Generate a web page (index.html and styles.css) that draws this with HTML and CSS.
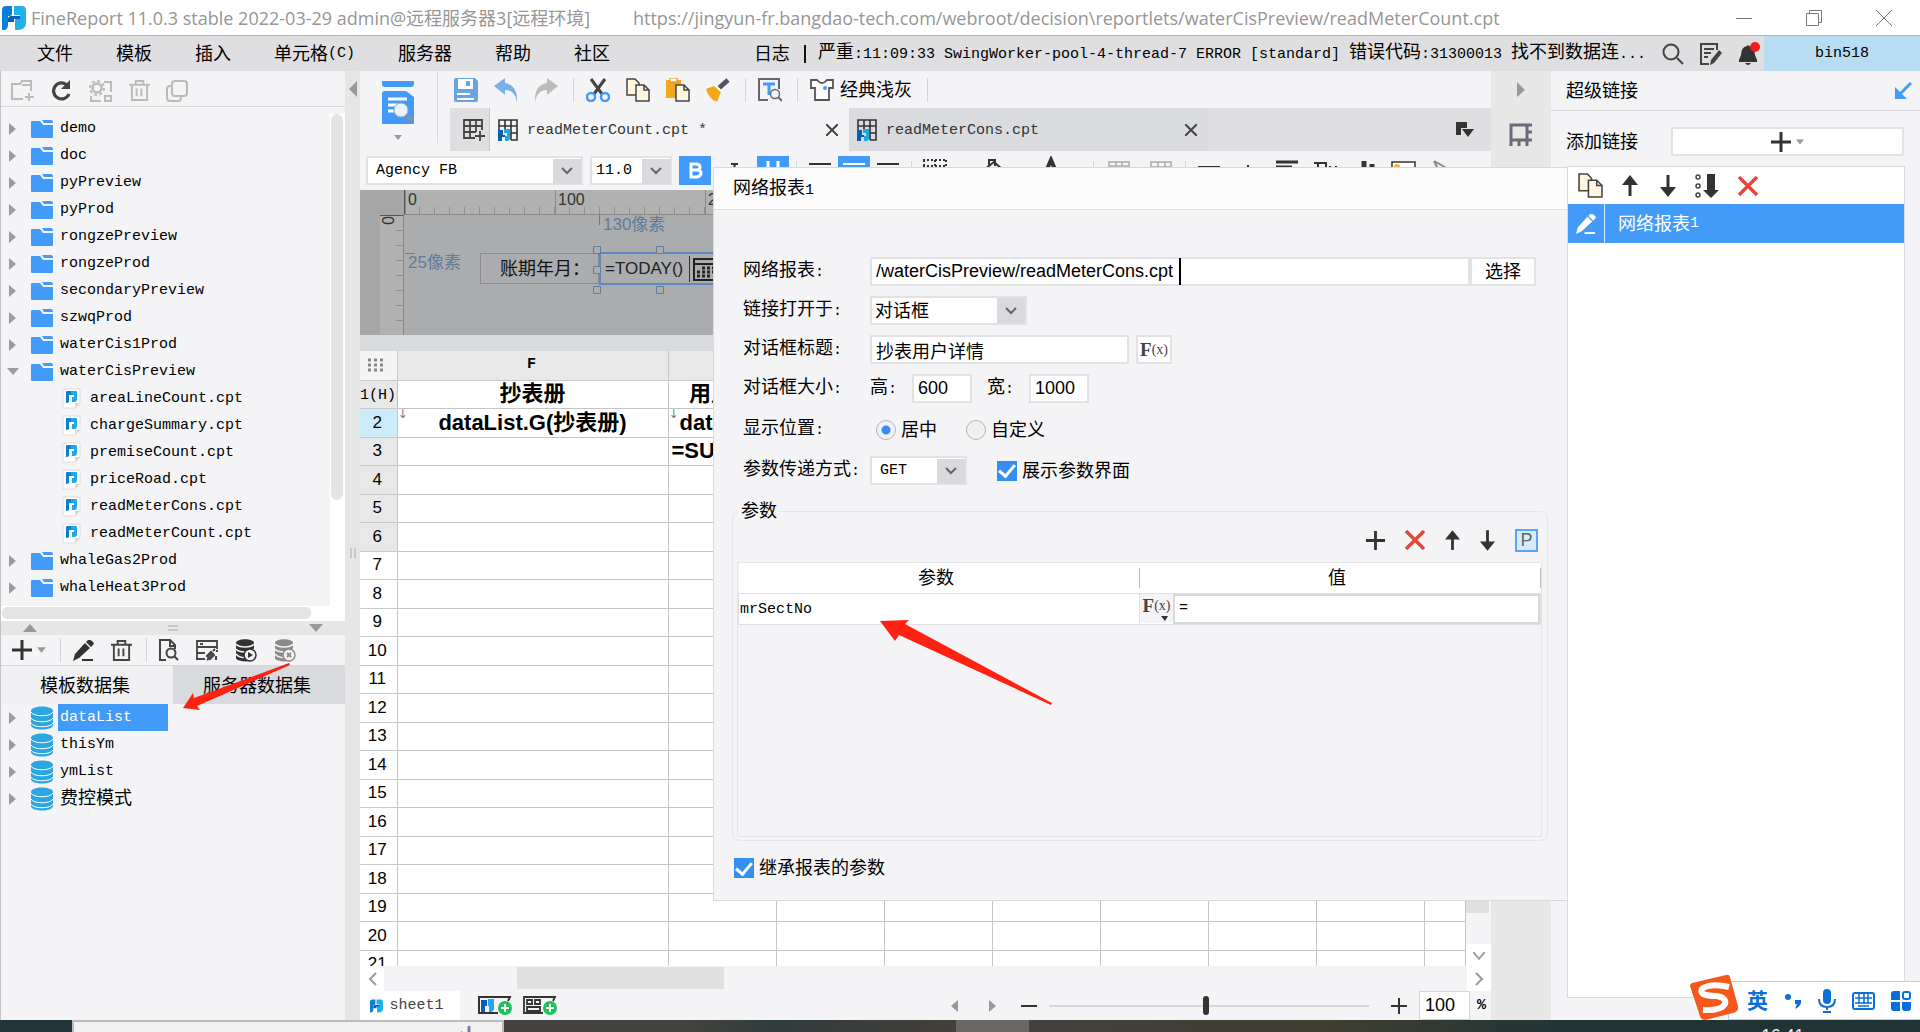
FILE: index.html
```html
<!DOCTYPE html>
<html lang="zh-CN">
<head>
<meta charset="utf-8">
<title>FineReport 11.0.3</title>
<link rel="stylesheet" href="styles.css">
</head>
<body>
<svg class="defs" aria-hidden="true">
  <symbol id="logo" viewBox="0 0 24 24"><path fill="#0a7fd8" d="M4 0h6v8q0 2-2 2H6v9q0 5-5 5H0V4q0-4 4-4z"/><path fill="#22b0e8" d="M12 0h8q4 0 4 4v12q0 8-8 8h-3V12h5V9h-6z"/><path fill="#0a5fb4" d="M8 10h10v3h-6v3H6v-4z"/></symbol>
  <symbol id="chev" viewBox="0 0 12 8"><path d="M1 1l5 5 5-5" fill="none" stroke="#666" stroke-width="2"/></symbol>
  <symbol id="folder" viewBox="0 0 22 18"><path fill="#429bf9" d="M0 2q0-1 1-1h8l3 4h10v12q0 1-1 1H1q-1 0-1-1z"/><path fill="#429bf9" d="M11 0h9q2 0 2 3h-9z"/></symbol>
  <symbol id="cpt" viewBox="0 0 19 21"><path fill="#fff" stroke="#dcdcdf" d="M1 1h17v14l-5 5H1z"/><path fill="#dcdcdf" d="M18 15l-5 5v-5z"/><path fill="#0a7fd8" d="M4 4q0-1 1-1h4v4H7v7q-1 1-3 1z"/><path fill="#20a8e6" d="M9 3h5q1 0 1 1v7q0 3-3 3h-2V9h2V7H9z"/></symbol>
  <symbol id="db" viewBox="0 0 22 24"><path fill="#2ca6e0" d="M0 5c0-6 22-6 22 0v14c0 6-22 6-22 0z"/><path d="M0 6c2 5 20 5 22 0M0 12c2 5 20 5 22 0M0 17c2 5 20 5 22 0" fill="none" stroke="#fff" stroke-width="1"/></symbol>
  <symbol id="plus" viewBox="0 0 20 20"><path d="M10 0v20M0 10h20" stroke="#333" stroke-width="3"/></symbol>
  <symbol id="cross" viewBox="0 0 20 20"><path d="M1 1l18 18M19 1L1 19" stroke="#e8443a" stroke-width="3.4"/></symbol>
  <symbol id="up" viewBox="0 0 16 22"><path d="M8 6v15" stroke="#333" stroke-width="3"/><path fill="#333" d="M8 0l8 10H0z"/></symbol>
  <symbol id="down" viewBox="0 0 16 22"><path d="M8 0v15" stroke="#333" stroke-width="3"/><path fill="#333" d="M8 22l8-10H0z"/></symbol>
  <symbol id="copy" viewBox="0 0 24 24"><g fill="#fff6e0" stroke="#444" stroke-width="1.5"><path d="M1 1h8l4 4v12H1z"/><path d="M10 7h8l5 5v11H10z"/><path d="M18 7v5h5" fill="none"/></g></symbol>
  <symbol id="tri" viewBox="0 0 10 6"><path fill="#999" d="M0 0h10L5 6z"/></symbol>
  <symbol id="trash" viewBox="0 0 22 22"><path d="M0 5h22M7 5V1h8v4M3 5v16h16V5M8 9v8M13 9v8" fill="none" stroke="currentColor" stroke-width="2"/></symbol>
  <symbol id="sheet" viewBox="0 0 20 22"><path d="M1 11V1h18v20h-6M1 7h18M13 14h6M7 1v9M13 1v20" fill="none" stroke="#333" stroke-width="1.6"/><path fill="#0a5fb4" d="M0 11h5v5h2v2H4v4H0z"/><path fill="#22a8e8" d="M6 10h6v9q0 3-3 3H7v-5h2v-3H6z"/></symbol>
  <symbol id="pencil" viewBox="0 0 21 21"><path fill="currentColor" d="M15 0q1-1 4 1t1 4l-2 2-5-5zM12 3l5 5L6 18l-6 3 2-7z"/><path stroke="currentColor" stroke-width="2" d="M9 20h11"/></symbol>
</svg>

<header class="titlebar">
  <svg class="applogo"><use href="#logo"/></svg>
  <span class="t1">FineReport 11.0.3 stable 2022-03-29 admin@远程服务器3[远程环境]</span>
  <span class="t2">https://jingyun-fr.bangdao-tech.com/webroot/decision\reportlets/waterCisPreview/readMeterCount.cpt</span>
  <div class="winbtns">
    <button aria-label="最小化"><svg width="16" height="16"><path d="M0 8.500h16" stroke="#777"/></svg></button>
    <button aria-label="还原"><svg width="16" height="16"><path d="M.5 3.500h12v12h-12zM3.500 3V.5h12v12H13" fill="none" stroke="#777"/></svg></button>
    <button aria-label="关闭"><svg width="16" height="16"><path d="M0 0l16 16M16 0L0 16" stroke="#777"/></svg></button>
  </div>
</header>

<nav class="menubar">
  <button>文件</button><button>模板</button><button>插入</button><button>单元格<i>(C)</i></button><button>服务器</button><button>帮助</button><button>社区</button>
  <p class="log"><span>日志</span><b></b><span>严重<i>:11:09:33 SwingWorker-pool-4-thread-7 ERROR [standard] </i>错误代码<i>:31300013 </i>找不到数据连<i>...</i></span></p>
  <div class="tools">
    <svg width="22" height="22" viewBox="0 0 22 22"><circle cx="9" cy="9" r="7.500" fill="none" stroke="#444" stroke-width="2"/><path d="M15 15l6 6" stroke="#444" stroke-width="2"/></svg>
    <svg width="22" height="22" viewBox="0 0 22 22"><path d="M17 7V1H1v20h8M4 6h10M4 10h7M4 14h4" fill="none" stroke="#444" stroke-width="2"/><path fill="#444" d="M19 7l3 3-8 10-4 2 1-5z"/></svg>
    <svg width="22" height="24" viewBox="0 0 22 24"><path fill="#333" d="M9 4q1-2 2 0q6 1 6 9l2 5v2H1v-2l2-5q0-8 6-9zM7 21h6q-3 4-6 0z"/><circle cx="17" cy="5" r="5" fill="#f21d1d"/></svg>
  </div>
  <button class="user"><i>bin518</i></button>
</nav>

<main class="app">
  <aside class="left">
    <div class="lefttools">
      <svg width="24" height="22" viewBox="0 0 24 22"><path d="M12 19H1V4h8l2-3h9v10M11 5h9M18 13v8M14 17h9" fill="none" stroke="#bbb" stroke-width="2"/></svg>
      <svg width="22" height="22" viewBox="0 0 22 22"><path d="M16 5a8 8 0 1 0 2 9" fill="none" stroke="#444" stroke-width="3.200"/><path fill="#444" d="M19 0v9h-9z"/></svg>
      <svg width="24" height="22" viewBox="0 0 24 22"><circle cx="8" cy="8" r="4.500" fill="none" stroke="#bbb" stroke-width="2.500"/><circle cx="8" cy="8" r="7" fill="none" stroke="#bbb" stroke-width="2" stroke-dasharray="3 2.500"/><path d="M15 2h7v10M2 16v5h10M16 20v-4h6v5h-6z" fill="none" stroke="#bbb" stroke-width="2"/></svg>
      <svg width="21" height="21" color="#bbb"><use href="#trash"/></svg>
      <svg width="22" height="22" viewBox="0 0 22 22"><rect x="6" y="1" width="15" height="15" rx="3" fill="none" stroke="#bbb" stroke-width="2"/><path d="M6 6H4q-3 0-3 3v9q0 3 3 3h8q3 0 3-3v-2" fill="none" stroke="#bbb" stroke-width="2"/></svg>
    </div>
    <div class="treebox">
      <ul class="tree">
        <li class="node"><svg><use href="#folder"/></svg><i>demo</i></li>
        <li class="node"><svg><use href="#folder"/></svg><i>doc</i></li>
        <li class="node"><svg><use href="#folder"/></svg><i>pyPreview</i></li>
        <li class="node"><svg><use href="#folder"/></svg><i>pyProd</i></li>
        <li class="node"><svg><use href="#folder"/></svg><i>rongzePreview</i></li>
        <li class="node"><svg><use href="#folder"/></svg><i>rongzeProd</i></li>
        <li class="node"><svg><use href="#folder"/></svg><i>secondaryPreview</i></li>
        <li class="node"><svg><use href="#folder"/></svg><i>szwqProd</i></li>
        <li class="node"><svg><use href="#folder"/></svg><i>waterCis1Prod</i></li>
        <li class="node open"><svg><use href="#folder"/></svg><i>waterCisPreview</i></li>
        <li class="leaf"><svg><use href="#cpt"/></svg><i>areaLineCount.cpt</i></li>
        <li class="leaf"><svg><use href="#cpt"/></svg><i>chargeSummary.cpt</i></li>
        <li class="leaf"><svg><use href="#cpt"/></svg><i>premiseCount.cpt</i></li>
        <li class="leaf"><svg><use href="#cpt"/></svg><i>priceRoad.cpt</i></li>
        <li class="leaf"><svg><use href="#cpt"/></svg><i>readMeterCons.cpt</i></li>
        <li class="leaf"><svg><use href="#cpt"/></svg><i>readMeterCount.cpt</i></li>
        <li class="node"><svg><use href="#folder"/></svg><i>whaleGas2Prod</i></li>
        <li class="node"><svg><use href="#folder"/></svg><i>whaleHeat3Prod</i></li>
      </ul>
      <div class="vbar"><div></div></div>
    </div>
    <div class="hbar"><div></div></div>
    <div class="hsplit">
      <svg width="14" height="8" viewBox="0 0 14 8"><path fill="#999" d="M0 8h14L7 0z"/></svg>
      <svg width="10" height="6"><path d="M0 1h10M0 5h10" stroke="#aaa" stroke-width="1"/></svg>
      <svg width="14" height="8" viewBox="0 0 14 8"><path fill="#999" d="M0 0h14L7 8z"/></svg>
    </div>
    <div class="dstools">
      <svg width="20" height="20"><use href="#plus"/></svg><svg class="dd" width="9" height="6"><use href="#tri"/></svg><b></b>
      <svg width="21" height="21" color="#333"><use href="#pencil"/></svg>
      <svg width="21" height="21" color="#444"><use href="#trash"/></svg><b></b>
      <svg width="20" height="22" viewBox="0 0 20 22"><path d="M7 21H1V1h10l5 5v4M11 1v6h5" fill="none" stroke="#444" stroke-width="2"/><circle cx="12" cy="14" r="4.500" fill="none" stroke="#444" stroke-width="2"/><path d="M15 17l4 4" stroke="#444" stroke-width="2"/></svg>
      <svg width="22" height="22" viewBox="0 0 22 22"><path d="M9 20H1V2h20v8M1 8h20M4 5h3M1 14h8" fill="none" stroke="#444" stroke-width="1.800"/><path d="M11 17l4-4 3 3-4 4zM17 12l2-2M11 21l2-2M21 13v-2M20 17v4" stroke="#444" stroke-width="2" fill="#555"/></svg>
      <svg width="22" height="23" viewBox="0 0 22 23"><path fill="#333" d="M1 4c0-5 18-5 18 0v15c0 5-18 4-18 0z"/><path d="M1 5c3 4 15 4 18 0M1 10c3 4 15 4 18 0M1 15c3 4 9 4 10 3" fill="none" stroke="#f4f4f6" stroke-width="1.500"/><circle cx="15" cy="16" r="6" fill="#f4f4f6" stroke="#333" stroke-width="1.500"/><path fill="#333" d="M13 13l5 3-5 3z"/></svg>
      <svg width="22" height="23" viewBox="0 0 22 23"><path fill="#8a8a8a" d="M1 4c0-5 18-5 18 0v15c0 5-18 4-18 0z"/><path d="M1 5c3 4 15 4 18 0M1 10c3 4 15 4 18 0M1 15c3 4 9 4 10 3" fill="none" stroke="#f4f4f6" stroke-width="1.500"/><circle cx="15" cy="16" r="6" fill="#f4f4f6" stroke="#8a8a8a" stroke-width="1.500"/><path stroke="#8a8a8a" stroke-width="2" d="M13 14l4 4M17 14l-4 4"/></svg>
    </div>
    <div class="dstabs"><button>模板数据集</button><button>服务器数据集</button></div>
    <ul class="tree sets">
      <li class="node sel"><svg><use href="#db"/></svg><i>dataList</i></li>
      <li class="node"><svg><use href="#db"/></svg><i>thisYm</i></li>
      <li class="node"><svg><use href="#db"/></svg><i>ymList</i></li>
      <li class="node"><svg><use href="#db"/></svg><span>费控模式</span></li>
    </ul>
  </aside>
  <div class="vsplit"><svg width="8" height="16"><path fill="#999" d="M8 0v16L0 8z"/></svg><svg class="grip" width="6" height="10"><path d="M1 0v10M5 0v10" stroke="#aaa"/></svg></div>

  <section class="center">
    <div class="tophead">
      <button class="preview" aria-label="预览"><svg width="32" height="43" viewBox="0 0 32 43"><path fill="#429bf9" d="M0 0h32v3q0 3-3 3H3Q0 6 0 3zM3 10h21l8 6v26q0 1-1 1H1q-1 0-1-1V13q0-3 3-3z"/><path stroke="#fff" stroke-width="3" d="M6 18h19M6 24h10M6 30h8"/><circle cx="19" cy="29" r="7" fill="#e9f1fa" stroke="#9ab" stroke-width="1"/><path stroke="#8a8f96" stroke-width="4" d="M25 35l5 5"/></svg><svg width="8" height="5"><use href="#tri"/></svg></button>
      <div class="headmain">
        <div class="icons">
          <svg viewBox="0 0 24 24"><path fill="#6ba3e0" d="M2 0h19l3 3v19q0 2-2 2H2q-2 0-2-2V2q0-2 2-2z"/><path fill="#fff" d="M4 1h15v10H4zM3 15h13v2H3zM3 20h17v2H3z"/><path fill="#6ba3e0" d="M12 3h4v5h-4z"/></svg>
          <svg viewBox="0 0 24 24"><path fill="#7ab0ea" d="M0 8L11 0v5q13 2 12 19Q21 12 11 12v5z"/></svg>
          <svg viewBox="0 0 24 24"><path fill="#bbb" d="M24 8L13 0v5Q0 7 1 24 3 12 13 12v5z"/></svg>
          <b></b>
          <svg viewBox="0 0 24 24"><path d="M5 1l11 15M19 1L8 16" stroke="#444" stroke-width="3"/><circle cx="5" cy="19" r="4" fill="none" stroke="#429bf9" stroke-width="2.500"/><circle cx="19" cy="19" r="4" fill="none" stroke="#429bf9" stroke-width="2.500"/></svg>
          <svg><use href="#copy"/></svg>
          <svg viewBox="0 0 24 24"><path fill="#f2a81d" d="M0 2h15v18H0z"/><path fill="#fff" stroke="#d98d10" d="M4 0h7v4H4z"/><path fill="#fff6e0" stroke="#444" stroke-width="1.500" d="M10 7h8l5 5v11H10zM18 7v5h5"/></svg>
          <svg viewBox="0 0 24 24"><path fill="#f2a81d" d="M0 11l8-3 7 6-4 10Q3 21 0 11z"/><path stroke="#556" stroke-width="5" d="M13 10l9-8"/><path stroke="#fff" stroke-width="2" d="M9 7l7 7"/></svg>
          <b></b>
          <svg viewBox="0 0 24 24"><path d="M10 22H1V1h20v10" fill="none" stroke="#667" stroke-width="2"/><path d="M5 6h12M11 6v11" stroke="#429bf9" stroke-width="3"/><circle cx="17" cy="16" r="4.500" fill="#f4f4f6" stroke="#667" stroke-width="1.500"/><path d="M20 19l4 4" stroke="#667" stroke-width="2"/></svg>
          <b></b>
          <svg viewBox="0 0 24 24"><path d="M7 2H1v8h4v12h14V10h4V2h-6q-5 6-10 0z" fill="#fff" stroke="#555" stroke-width="1.800"/><circle cx="15" cy="10" r="2" fill="#429bf9"/></svg>
          <span>经典浅灰</span><b></b>
        </div>
        <div class="doctabs">
          <button class="add" aria-label="新建"><svg width="22" height="22" viewBox="0 0 22 22"><path d="M12 19H1V1h18v10M1 7h18M1 13h12M7 1v18M13 1v12M17 12v10M12 17h10" fill="none" stroke="#444" stroke-width="1.800"/></svg></button>
          <div class="dtab on"><svg width="20" height="22"><use href="#sheet"/></svg><i>readMeterCount.cpt *</i><button aria-label="关闭"><svg width="12" height="12"><path d="M0 0l12 12M12 0L0 12" stroke="#444" stroke-width="2"/></svg></button></div>
          <div class="dtab"><svg width="20" height="22"><use href="#sheet"/></svg><i>readMeterCons.cpt</i><button aria-label="关闭"><svg width="12" height="12"><path d="M0 0l12 12M12 0L0 12" stroke="#444" stroke-width="2"/></svg></button></div>
          <svg class="more" width="18" height="15"><path fill="#333" d="M0 0h11v6H5v7H0zM6 7h12l-6 8z"/></svg>
        </div>
      </div>
    </div>
    <div class="format">
      <div class="combo fontname"><select aria-label="字体"><option>Agency FB</option></select><svg><use href="#chev"/></svg></div>
      <div class="combo fontsize"><select aria-label="字号"><option>11.0</option></select><svg><use href="#chev"/></svg></div>
      <button class="on" aria-label="加粗"><svg viewBox="0 0 32 29"><path d="M12 8h5q4 0 4 3t-4 3h-5zM12 14h6q4 0 4 3t-4 4h-6z" fill="none" stroke="#fff" stroke-width="3"/></svg></button>
      <button aria-label="斜体"><svg viewBox="0 0 32 29"><path d="M13 8h7M17 8l-3 14" stroke="#333" stroke-width="2"/></svg></button>
      <button class="on" aria-label="下划线"><svg viewBox="0 0 32 29"><path d="M11 5v8q0 5 5 5t5-5V5" fill="none" stroke="#fff" stroke-width="3"/></svg></button>
      <b></b>
      <button aria-label="左对齐"><svg viewBox="0 0 32 29"><path d="M5 8h22M5 12h14" stroke="#333" stroke-width="2"/></svg></button>
      <button class="on near" aria-label="居中"><svg viewBox="0 0 32 29"><path d="M5 8h22M9 12h14" stroke="#fff" stroke-width="2"/></svg></button>
      <button class="near" aria-label="右对齐"><svg viewBox="0 0 32 29"><path d="M5 8h22M13 12h14" stroke="#333" stroke-width="2"/></svg></button>
      <b></b>
      <button aria-label="边框"><svg viewBox="0 0 32 29"><path d="M4 4h24M5 4v12M16 4v12M27 4v12M4 10h24" stroke="#333" stroke-width="2" stroke-dasharray="2 2"/></svg></button><span class="arrow"></span>
      <button aria-label="填充"><svg viewBox="0 0 32 29"><path d="M12 10V4h6v6M8 13l9-7 8 7" fill="none" stroke="#333" stroke-width="2"/></svg></button><span class="arrow"></span>
      <button aria-label="字体颜色"><svg viewBox="0 0 32 29"><path d="M10 18l6-14 6 14" fill="none" stroke="#333" stroke-width="4"/></svg></button><span class="arrow"></span>
      <b></b>
      <button class="wide" aria-label="合并"><svg viewBox="0 0 32 29"><path d="M6 6h20v14H6zM6 10h20M13 6v4M19 6v4" fill="none" stroke="#aaa" stroke-width="1.500"/></svg></button>
      <button class="wide" aria-label="拆分"><svg viewBox="0 0 32 29"><path d="M6 6h20v14H6zM6 11h20M13 6v14M20 6v14" fill="none" stroke="#aaa" stroke-width="1.500"/></svg></button>
      <b></b>
      <button aria-label="文本"><svg viewBox="0 0 32 29"><path d="M5 11h22" stroke="#333" stroke-width="2"/></svg></button>
      <button aria-label="数据列"><svg viewBox="0 0 32 29"><path d="M16 9v8M8 12h4M20 12h4" stroke="#333" stroke-width="2"/></svg></button>
      <button aria-label="段落"><svg viewBox="0 0 32 29"><path d="M5 6h22M5 11h16" stroke="#333" stroke-width="3"/></svg></button>
      <button aria-label="公式"><svg viewBox="0 0 32 29"><path d="M4 7h12v4M8 7v10M20 10v6M26 10v6" fill="none" stroke="#333" stroke-width="2"/></svg></button>
      <button aria-label="图表"><svg viewBox="0 0 32 29"><path d="M9 11v6M15 5v12M23 8v9" stroke="#333" stroke-width="5"/></svg></button>
      <button aria-label="图片"><svg viewBox="0 0 32 29"><path d="M4 6h23v14H4z" fill="#fff" stroke="#333" stroke-width="1.500"/><circle cx="9" cy="11" r="3" fill="#f2b32c"/></svg></button>
      <button aria-label="斜线"><svg viewBox="0 0 32 29"><path d="M7 5l16 9M7 5l5 10" stroke="#888" stroke-width="2"/></svg></button>
    </div>
    <div class="params">
      <div class="hruler"><em>0</em><em>100</em><em>200</em></div>
      <div class="vruler"><em>0</em></div>
      <div class="canvas">
        <span class="hint top">130像素</span>
        <span class="hint side">25像素</span>
        <span class="plabel">账期年月：</span>
        <span class="pvalue">=TODAY()<svg width="34" height="26" viewBox="0 0 34 26"><path stroke="#333" d="M.5 0v26"/><path d="M5 3h28v21H5zM5 8h28" fill="none" stroke="#222" stroke-width="2"/><path d="M13 12h18M8 16h23M8 20h14" stroke="#222" stroke-width="3" stroke-dasharray="3 2"/></svg></span>
        <svg class="handles" width="80" height="48"><path d="M.5.5h7v7h-7zM63.500.5h7v7h-7zM.5 20.500h7v7h-7zM.5 40.500h7v7h-7zM63.500 40.500h7v7h-7z" fill="#adadad" stroke="#5d7f9f"/></svg>
      </div>
    </div>
    <div class="gridbox">
      <div class="gridwrap">
      <table class="grid">
        <colgroup><col class="cn"><col class="cf"><col><col><col><col><col><col><col><col class="last"></colgroup>
        <thead><tr><th><svg width="16" height="14"><path d="M0 2h16M0 7h16M0 12h16" stroke="#888" stroke-width="3" stroke-dasharray="3 3"/></svg><th>F<th>G<th>H<th>I<th>J<th>K<th>L<th>M<th></tr></thead>
        <tbody>
        <tr><th><i>1(H)</i><td>抄表册<td>用户数<td><td><td><td><td><td><td></tr>
        <tr class="cur"><th>2<td class="x">dataList.G(抄表册)<td class="x l">dataList<td><td><td><td><td><td><td></tr>
        <tr><th>3<td><td class="l">=SUM(G2)<td><td><td><td><td><td><td></tr>
        <tr><th>4<td><td><td><td><td><td><td><td><td></tr>
        <tr><th>5<td><td><td><td><td><td><td><td><td></tr>
        <tr><th>6<td><td><td><td><td><td><td><td><td></tr>
        <tr class="w"><th>7<td><td><td><td><td><td><td><td><td></tr>
        <tr class="w"><th>8<td><td><td><td><td><td><td><td><td></tr>
        <tr class="w"><th>9<td><td><td><td><td><td><td><td><td></tr>
        <tr class="w"><th>10<td><td><td><td><td><td><td><td><td></tr>
        <tr class="w"><th>11<td><td><td><td><td><td><td><td><td></tr>
        <tr class="w"><th>12<td><td><td><td><td><td><td><td><td></tr>
        <tr class="w"><th>13<td><td><td><td><td><td><td><td><td></tr>
        <tr class="w"><th>14<td><td><td><td><td><td><td><td><td></tr>
        <tr class="w"><th>15<td><td><td><td><td><td><td><td><td></tr>
        <tr class="w"><th>16<td><td><td><td><td><td><td><td><td></tr>
        <tr class="w"><th>17<td><td><td><td><td><td><td><td><td></tr>
        <tr class="w"><th>18<td><td><td><td><td><td><td><td><td></tr>
        <tr class="w"><th>19<td><td><td><td><td><td><td><td><td></tr>
        <tr class="w"><th>20<td><td><td><td><td><td><td><td><td></tr>
        <tr class="w"><th>21<td><td><td><td><td><td><td><td><td></tr>
        </tbody>
      </table>
      </div>
      <div class="gridv"><div></div><button aria-label="向下"><svg width="14" height="9" viewBox="0 0 12 8"><path d="M1 1l5 6 5-6" fill="none" stroke="#999" stroke-width="1.500"/></svg></button></div>
    </div>
    <div class="gridh"><button aria-label="向左"><svg width="9" height="14"><path d="M8 1L2 7l6 6" fill="none" stroke="#999" stroke-width="2"/></svg></button><div></div><button aria-label="向右"><svg width="9" height="14"><path d="M1 1l6 6-6 6" fill="none" stroke="#999" stroke-width="2"/></svg></button></div>
    <div class="sheets">
      <button class="sheet"><svg width="13" height="14"><use href="#logo"/></svg><i>sheet1</i></button>
      <button aria-label="新建表格"><svg width="34" height="19" viewBox="0 0 34 19"><path d="M20 17H1V1h31l-2 4" fill="none" stroke="#333" stroke-width="2"/><path fill="#0a5fb4" d="M3 4h6v6H7v6H3z"/><path fill="#22a8e8" d="M10 3h6v9q0 4-4 4h-1v-6h-1z"/><circle cx="27" cy="12" r="7" fill="#1ec258"/><path d="M27 8v8M23 12h8" stroke="#fff" stroke-width="2"/></svg></button>
      <button aria-label="新建表单"><svg width="34" height="19" viewBox="0 0 34 19"><path d="M20 17H1V1h31l-2 4M4 4h5v4H4zM12 4h5v4h-5zM4 11h13v4H4z" fill="none" stroke="#333" stroke-width="1.800"/><circle cx="27" cy="12" r="7" fill="#1ec258"/><path d="M27 8v8M23 12h8" stroke="#fff" stroke-width="2"/></svg></button>
      <div class="zoom">
        <svg width="7" height="12"><path fill="#999" d="M7 0v12L0 6z"/></svg>
        <svg class="nx" width="7" height="12"><path fill="#999" d="M0 0v12l7-6z"/></svg>
        <svg class="mn" width="16" height="16"><path d="M0 8h16" stroke="#333" stroke-width="2"/></svg>
        <input type="range" aria-label="缩放" min="0" max="100" value="49">
        <svg class="pl" width="16" height="16"><path d="M0 8h16M8 0v16" stroke="#333" stroke-width="2"/></svg>
        <input type="text" aria-label="缩放比例" value="100"><i>%</i>
      </div>
    </div>
  </section>

  <div class="rsplit"><svg width="8" height="15"><path fill="#999" d="M0 0v15l8-7z"/></svg><svg width="24" height="24" viewBox="0 0 24 24"><path d="M2 23V2h21M18 2v15M2 17h21M10 17v6M18 17v6M18 9h5" fill="none" stroke="#6b6b78" stroke-width="3"/></svg></div>
  <aside class="right">
    <h2>超级链接<svg width="17" height="17"><path d="M16 1L5 12" stroke="#429bf9" stroke-width="3"/><path fill="#429bf9" d="M0 5v12h12z"/></svg></h2>
    <div class="addrow"><label for="addlink">添加链接</label><button id="addlink"><svg width="20" height="20"><use href="#plus"/></svg><svg width="8" height="6"><use href="#tri"/></svg></button></div>
    <div class="links">
      <div class="linktools"><svg width="25" height="25"><use href="#copy"/></svg><svg width="16" height="22"><use href="#up"/></svg><svg width="16" height="22"><use href="#down"/></svg><svg width="24" height="24" viewBox="0 0 24 24"><path fill="none" stroke="#444" stroke-width="1.500" d="M1 3a2 2 0 1 0 4 0a2 2 0 1 0-4 0M1 12a2 2 0 1 0 4 0a2 2 0 1 0-4 0M1 21a2 2 0 1 0 4 0a2 2 0 1 0-4 0"/><path fill="#333" d="M12 0h8v16h4l-8 8-8-8h4z"/></svg><svg width="20" height="20"><use href="#cross"/></svg></div>
      <div class="linkrow"><span><svg width="20" height="20" color="#fff"><use href="#pencil"/></svg></span><span>网络报表<i>1</i></span></div>
    </div>
  </aside>
</main>

<footer class="taskbar"><div class="tk1"></div><div class="tk2"><svg width="14" height="8"><path d="M0 8l2-3M8 0l2 0 0 6 3 2H8z" stroke="#8a8aa8" fill="#6a6a90"/></svg></div><div class="tk3"></div><div class="tk4"></div><div class="tk5"></div></footer>

<section class="dialog" role="dialog" aria-labelledby="dlgt">
  <h2 id="dlgt">网络报表<i>1</i></h2>
  <form>
    <div class="frow"><label for="rep">网络报表<i>:</i></label><input class="grow" id="rep" value="/waterCisPreview/readMeterCons.cpt"><span class="caret"></span><button type="button" class="pick">选择</button></div>
    <div class="frow"><label for="opn">链接打开于<i>:</i></label><div class="combo open"><select id="opn"><option>对话框</option></select><svg><use href="#chev"/></svg></div></div>
    <div class="frow"><label for="ttl">对话框标题<i>:</i></label><input class="ttl" id="ttl" value="抄表用户详情"><button type="button" class="fx">F<small>(x)</small></button></div>
    <div class="frow"><span class="lab">对话框大小<i>:</i></span><label class="sm" for="hh">高<i>:</i></label><input class="num" id="hh" value="600"><label class="sm second" for="ww">宽<i>:</i></label><input class="num" id="ww" value="1000"></div>
    <div class="frow pos"><span class="lab">显示位置<i>:</i></span><label class="opt"><input type="radio" name="pos" checked>居中</label><label class="opt"><input type="radio" name="pos">自定义</label></div>
    <div class="frow"><label for="mth">参数传递方式<i>:</i></label><div class="combo get"><select id="mth"><option>GET</option></select><svg><use href="#chev"/></svg></div><label class="opt show"><input type="checkbox" checked>展示参数界面</label></div>
    <fieldset>
      <legend>参数</legend>
      <div class="ptools"><svg width="19" height="19"><use href="#plus"/></svg><svg width="20" height="20"><use href="#cross"/></svg><svg width="15" height="21"><use href="#up"/></svg><svg width="15" height="21"><use href="#down"/></svg><button type="button">P</button></div>
      <div class="ptable"><table><thead><tr><th>参数</th><th>值</th></tr></thead><tbody><tr><td><i>mrSectNo</i></td><td><div class="val"><button type="button" class="fx">F<small>(x)</small><svg width="7" height="5"><path fill="#333" d="M0 0h7L4 5z"/></svg></button><input aria-label="值" value="="></div></td></tr></tbody></table></div>
    </fieldset>
    <label class="opt inherit"><input type="checkbox" checked>继承报表的参数</label>
  </form>
</section>

<svg class="notes" width="1060" height="710" aria-hidden="true"><path fill="#ff2112" d="M183 708l10-15 1 5 95-35 1 2-93 41 3 4zM880 621l29-1-4 4 147 79-1 2-152-70-4 6z"/></svg>

<div class="ime">
  <svg width="50" height="46" viewBox="0 0 50 46"><path fill="#f4581c" d="M2 9L36 1q3-1 4 2l8 29q1 6-5 7l-28 7q-4 0-5-4L0 12q0-2 2-3z"/><path d="M39 13q-12-3-21-1-10 3-5 8 4 2 14 2 10 2 8 8-4 7-22 6" fill="none" stroke="#fff" stroke-width="6"/></svg>
  <div class="imebar"><span>英</span>
    <svg width="18" height="18"><circle cx="4" cy="5" r="3" fill="#0a6fd8"/><path fill="#0a6fd8" d="M11 8h6q1 6-6 9l2-5h-2z"/></svg>
    <svg width="18" height="24" viewBox="0 0 18 24"><rect x="5" width="8" height="15" rx="4" fill="#0a6fd8"/><path d="M1 10q0 8 8 8t8-8M9 18v3M5 23h8" fill="none" stroke="#0a6fd8" stroke-width="2"/></svg>
    <svg width="23" height="18"><rect x="1" y="1" width="21" height="16" rx="2" fill="none" stroke="#0a6fd8" stroke-width="2"/><path d="M3 6h17M3 11h17M7 2v10M12 2v10M16 2v10M6 14h11" stroke="#0a6fd8" stroke-width="1.500"/></svg>
    <svg width="20" height="20"><path fill="#0a6fd8" d="M3 0h6v9H0V3q0-3 3-3zM0 11h9v9H3q-3 0-3-3zM11 11h9v6q0 3-3 3h-3q-3 0-3-3z"/><rect x="12" y="1" width="7" height="7" rx="2" fill="none" stroke="#0a6fd8" stroke-width="2"/></svg>
  </div>
</div>
<time class="clock">16:41</time>
</body>
</html>
```

FILE: styles.css
```css
* { box-sizing: border-box; }
html, body { height: 100%; }
body {
  margin: 0; display: flex; flex-direction: column; overflow: hidden; position: relative;
  background: #f4f4f6; color: #000;
  font: 18px/20px "Liberation Sans", "Noto Sans CJK SC", sans-serif;
}
button, input, select { font: inherit; color: inherit; margin: 0; }
button { border: 0; padding: 0; background: none; display: flex; align-items: center; justify-content: center; }
i { font: 15px/20px "Liberation Mono", "Noto Sans CJK SC", monospace; white-space: pre; }
ul { list-style: none; margin: 0; padding: 0; }
svg { flex: none; display: block; }
h2 { margin: 0; font-size: 18px; font-weight: 400; }
.defs { position: absolute; width: 0; height: 0; }

.titlebar { display: flex; align-items: center; height: 35px; flex: none; background: #fff; color: #969696; font-family: "Open Sans", "Noto Sans CJK SC", sans-serif; white-space: nowrap; padding-left: 2px; }
.applogo { width: 24px; height: 24px; margin-right: 5px; }
.t1 { width: 602px; }
.t2 { flex: 1; }
.winbtns { display: flex; gap: 54px; padding-right: 28px; }

.menubar { display: flex; align-items: center; height: 36px; flex: none; background: #dfdfe2; border-top: 1px solid #b4b4b6; gap: 43px; padding-left: 37px; white-space: nowrap; }
.log { display: flex; align-items: center; margin: 0 0 0 auto; }
.log b { width: 2px; height: 18px; background: #111; margin: 0 12px 0 14px; }
.tools { display: flex; align-items: center; gap: 16px; margin-left: -27px; }
.menubar .user { align-self: stretch; width: 156px; background: #b8dcf2; margin-left: -39px; }

.app { flex: 1; display: flex; min-height: 0; }
.left { width: 345px; flex: none; display: flex; flex-direction: column; border-left: 1px solid #c4c4c6; }
.lefttools { display: flex; align-items: center; gap: 16px; height: 36px; padding: 4px 0 0 10px; border-bottom: 1px solid #d6d6d8; }
.treebox { display: flex; height: 499px; overflow: hidden; }
.tree { flex: 1; padding-top: 8px; }
.tree li { display: flex; align-items: center; height: 27px; }
.node { padding-left: 8px; }
.node::before { content: ""; border: 6px solid transparent; border-left: 7px solid #9c9c9e; border-right: 0; margin-right: 15px; }
.node.open { padding-left: 6px; }
.node.open::before { border: 6px solid transparent; border-top: 7px solid #9c9c9e; border-bottom: 0; margin-right: 12px; }
.node svg { width: 22px; height: 18px; margin-right: 7px; }
.leaf { padding-left: 61px; }
.leaf svg { width: 19px; height: 21px; margin-right: 9px; }
.vbar { width: 15px; padding: 7px 2px 0 1px; background: linear-gradient(#f4f4f6 7px, #fff 7px); }
.vbar div { height: 386px; border-radius: 6px; background: #e4e4e5; }
.hbar { height: 15px; padding: 1px 0 1px 1px; background: #fff; }
.hbar div { width: 309px; height: 12px; border-radius: 5px; background: #e4e4e5; }
.hsplit { height: 14px; background: #e6e6e7; display: flex; align-items: center; justify-content: space-between; padding: 0 22px; }
.dstools { display: flex; align-items: center; height: 31px; border-bottom: 1px solid #d6d6d8; padding-left: 11px; gap: 17px; }
.dstools .dd { margin-left: -12px; }
.dstools b { width: 1px; height: 24px; background: #d4d4d6; margin: 0 -5px 0 -3px; }
.dstabs { display: flex; height: 38px; }
.dstabs button { flex: 1; background: #f0f0f2; padding: 2px 4px 0 0; }
.dstabs button + button { background: #d9dadd; }
.sets { padding: 0; }
.sets .node svg { height: 24px; margin-right: 5px; }
.sets .node i, .sets .node span { padding-left: 2px; line-height: 27px; }
.sets .sel i { width: 110px; background: #429bf9; color: #fff; }

.vsplit { width: 15px; flex: none; background: #e6e6e7; display: flex; flex-direction: column; align-items: center; padding-top: 10px; }
.grip { margin-top: 451px; }

.center { flex: 1; min-width: 0; display: flex; flex-direction: column; }
.tophead { display: flex; height: 80px; }
.preview { flex-direction: column; gap: 11px; width: 78px; justify-content: flex-start; padding: 10px 1px 0 0; border-right: 1px solid #d9d9db; margin: 0 12px 8px 0; }
.headmain { flex: 1; display: flex; flex-direction: column; }
.icons { display: flex; align-items: center; height: 37px; gap: 16px; padding-left: 4px; }
.icons svg { width: 24px; height: 24px; }
.icons b { width: 1px; height: 24px; background: #d4d4d6; margin: 0 -4px 0 -1px; }
.icons span { margin-left: -10px; }
.doctabs { display: flex; align-items: center; height: 43px; background: #dfdfe2; color: #333; }
.doctabs .add { width: 40px; height: 100%; border-right: 1px solid #c8c8ca; padding-left: 8px; }
.dtab { display: flex; align-items: center; width: 359px; height: 100%; padding: 0 11px 0 8px; background: #d9dbdf; }
.dtab.on { background: #f4f4f6; }
.dtab i { flex: 1; padding: 2px 0 0 9px; }
.more { margin: 0 17px 0 auto; }

.format { display: flex; align-items: center; height: 39px; padding-left: 6px; gap: 7px; overflow: hidden; }
.format button { width: 32px; height: 29px; flex: none; }
.format button.wide { width: 35px; }
.format button svg { width: 32px; height: 29px; }
.format button.on { background: #429bf9; }
.format .near { margin-left: -5px; }
.format b { width: 1px; height: 20px; background: #d4d4d6; flex: none; }
.arrow { border: 5px solid transparent; border-top-color: #999; border-bottom: 0; margin: 0 3px 0 -1px; }
.combo { position: relative; height: 29px; background: #fff; border: 2px solid #e2e2e4; flex: none; }
.combo select { appearance: none; width: 100%; height: 25px; padding: 0 30px 0 4px; border: 0; border-radius: 0; background: linear-gradient(#d9dadd, #d9dadd) right / 28px 100% no-repeat; }
.combo svg { position: absolute; right: 8px; top: 9px; width: 12px; height: 8px; pointer-events: none; }
.fontname { width: 217px; }
.fontsize { width: 82px; }
.fontname select, .fontsize select, .get select { font: 15px/20px "Liberation Mono", monospace; padding-left: 8px; }
.fontsize select { padding-left: 4px; }

.params { display: grid; grid-template: 25px 120px / 44px 1fr; background: #a7a7a8; color: #333; overflow: hidden; flex: none; }
.params em { font-style: normal; font-size: 16px; line-height: 20px; width: 150px; padding-left: 2px; flex: none; border-left: 1px solid #8c8c8c; }
.hruler { grid-column: 2; display: flex; overflow: hidden; border-left: 1px solid #555; border-bottom: 1px solid #888; background: repeating-linear-gradient(90deg, transparent 0 14px, #909090 14px 15px) bottom / 100% 7px no-repeat, #b1b1b1; }
.vruler { margin-left: 20px; border-right: 1px solid #888; border-top: 1px solid #555; background: repeating-linear-gradient(transparent 0 14px, #909090 14px 15px) right / 7px 100% no-repeat, #b1b1b1; }
.vruler em { display: block; width: 14px; border: 0; padding: 0; writing-mode: vertical-rl; line-height: 14px; }
.canvas { background: #abacae; position: relative; }
.canvas > * { position: absolute; white-space: nowrap; }
.hint { color: #5f7d9b; font-size: 17px; }
.hint.top { left: 195px; top: 0; padding-left: 4px; line-height: 20px; background: linear-gradient(#5f7d9b, #5f7d9b) 0 0 / 1px 10px no-repeat; }
.hint.side { left: 1px; top: 38px; padding-left: 3px; background: linear-gradient(#5f7d9b, #5f7d9b) 0 0 / 10px 1px no-repeat; }
.plabel { left: 76px; top: 38px; width: 119px; height: 31px; line-height: 31px; padding-left: 19px; border: 1px solid #8c8c8e; color: #111; }
.pvalue { left: 195px; top: 37px; height: 33px; display: flex; align-items: center; gap: 6px; padding-left: 4px; border: 2px solid #5a8bc4; color: #222; font-size: 17px; }
.handles { left: 189px; top: 31px; }

.gridbox { flex: 1; min-height: 0; display: flex; border-top: 16px solid #d9dadc; }
.gridwrap { flex: 1; overflow: hidden; background: #fff; }
.grid { width: 100%; table-layout: fixed; border-collapse: collapse; font-size: 22px; line-height: 24px; }
.grid col { width: 108px; }
.grid .cn { width: 37px; }
.grid .cf { width: 271px; }
.grid .last { width: auto; }
.grid th { background: #e8e8e9; border-bottom: 1px solid #c9c9cb; font-weight: 400; font-size: 17px; padding: 0 2px 0 0; height: 28px; text-align: center; }
.grid thead th { border-right: 1px solid #c9c9cb; font: 700 15px/20px "Liberation Mono", monospace; height: 29px; }
.grid thead th:first-child { background: #f4f4f6; padding-left: 8px; }
.grid td { border: 1px solid #c4c4c6; padding: 0; height: 28px; text-align: center; font-weight: 700; white-space: nowrap; overflow: hidden; }
.grid tbody tr:nth-child(even) td { height: 29px; }
.grid th i { font-size: 15px; }
.grid .l { text-align: left; padding-left: 3px; }
.grid .x { position: relative; }
.grid .x::before { content: "↓"; position: absolute; left: 0; top: 0; font: 12px/11px "DejaVu Sans", sans-serif; color: #777; }
.grid .x.l { padding-left: 11px; }
.grid .cur th { background: #cdecfb; }
.grid .w th { background: #fff; }
.gridv { width: 25px; display: flex; flex-direction: column; justify-content: space-between; }
.gridv div { height: 562px; background: #e0e0e1; margin-right: 2px; }
.gridv button { height: 22px; background: #fff; }
.gridh { height: 25px; display: flex; flex: none; }
.gridh button { width: 24px; background: #fff; }
.gridh div { width: 207px; height: 22px; margin: 1px auto 0 133px; background: #e0e0e1; }
.sheets { display: flex; align-items: center; height: 29px; gap: 11px; flex: none; }
.sheets .sheet { width: 100px; height: 29px; background: #fff; gap: 6px; color: #444; margin-right: 7px; padding-right: 6px; }
.zoom { display: flex; align-items: center; margin-left: auto; }
.zoom .nx { margin: 0 25px 0 31px; }
.zoom input[type=range] { appearance: none; width: 320px; height: 20px; margin: 0 22px 0 12px; background: linear-gradient(#d6d6d8, #d6d6d8) center / 100% 2px no-repeat; }
.zoom input[type=range]::-webkit-slider-thumb { appearance: none; width: 6px; height: 19px; border-radius: 3px; background: #333; }
.zoom input[type=text] { width: 51px; height: 29px; margin: 0 7px 0 12px; border: 1px solid #d4d4d6; background: #fff; padding: 0 5px; }
.zoom i { width: 14px; font-weight: 700; }

.rsplit { width: 60px; flex: none; background: #e7e7e8; display: flex; flex-direction: column; align-items: center; gap: 26px; padding-top: 11px; }
.right { width: 369px; flex: none; display: flex; flex-direction: column; }
.right h2 { display: flex; align-items: center; justify-content: space-between; height: 40px; padding: 0 8px 0 15px; border-bottom: 1px solid #d6d6d8; }
.addrow { display: flex; align-items: center; gap: 33px; height: 55px; padding: 6px 16px 0 15px; }
.addrow button { flex: 1; height: 29px; background: #fff; border: 2px solid #e2e2e4; gap: 5px; }
.links { flex: 1; margin: 0 15px 22px 16px; background: #fff; border: 1px solid #d9d9db; z-index: 2; }
.linktools { display: flex; align-items: center; gap: 19px; height: 37px; padding-left: 10px; }
.linktools svg:nth-child(3) { margin-left: 3px; }
.linkrow { display: flex; height: 39px; background: #429bf9; color: #fff; }
.linkrow span { display: flex; align-items: center; }
.linkrow span:first-child { width: 37px; border-right: 1px solid #d8e9fb; justify-content: center; }
.linkrow span + span { padding-left: 13px; }

.taskbar { display: flex; height: 12px; flex: none; background: #44433f; }
.tk1 { width: 72px; background: #20343a; }
.tk2 { width: 432px; background: #f1f1f1; border: 2px solid #bcbcbc; border-bottom: 0; padding: 4px 0 0 386px; overflow: hidden; }
.tk3 { width: 452px; background: linear-gradient(90deg, #45423f, #43443f 40%, #303c3c 60%, #453f3a); }
.tk4 { width: 73px; background: #686765; }
.tk5 { flex: 1; background: linear-gradient(90deg, #43413e, #3e3e30 35%, #203436 60%); }

.dialog { position: absolute; left: 713px; top: 167px; width: 855px; background: #f4f4f6; border: 1px solid #d9d9db; }
.dialog h2 { height: 42px; line-height: 41px; padding-left: 19px; background: #fcfcfc; border-bottom: 1px solid #e0e0e2; }
.dialog form { padding: 47px 19px 22px 18px; }
.frow { display: flex; align-items: center; height: 29px; margin-bottom: 10px; padding-left: 11px; }
.frow > label:first-child, .lab { width: 127px; flex: none; }
.frow input:not([type]) { height: 29px; border: 2px solid #e2e2e4; background: #fff; padding: 0 4px; min-width: 0; border-radius: 0; }
.frow .grow { width: 600px; }
.caret { width: 2px; height: 27px; background: #000; margin: 0 289px 0 -291px; }
.pick { width: 66px; height: 29px; background: #fff; border: 2px solid #e2e2e4; }
.open { width: 157px; }
.open select { padding-left: 3px; }
.frow .ttl { width: 259px; margin-right: 7px; }
.fx { width: 36px; height: 29px; background: #fff; border: 2px solid #e2e2e4; font: 700 19px/20px "Liberation Serif", serif; color: #444; }
.fx small { font-size: 14px; font-weight: 400; }
.sm { width: 42px; }
.sm.second { margin-left: 15px; }
.frow .num { width: 60px; }
.frow.pos { height: 33px; }
.opt { display: flex; align-items: center; gap: 5px; }
.pos .opt { padding-left: 6px; margin-right: 23px; }
.opt input { appearance: none; width: 20px; height: 20px; flex: none; }
.opt input[type=radio] { border: 1px solid #b4b4b6; border-radius: 50%; background: #f0f0f0; }
.opt input[type=radio]:checked { background: radial-gradient(circle, #3c8af5 4px, #eef1f6 5px); }
.opt input[type=checkbox] { background: #3390f2; display: grid; place-items: center; }
.opt input[type=checkbox]::before { content: ""; width: 7px; height: 13px; border: solid #fff; border-width: 0 3px 3px 0; rotate: 40deg; margin-bottom: 3px; }
.get { width: 97px; }
.show { margin-left: 30px; }
.dialog fieldset { margin: 16px 0 0; padding: 7px 5px 4px 4px; height: 340px; border: 1px solid #e6e6e8; border-radius: 8px; min-width: 0; }
.dialog legend { padding: 0 4px; }
.ptools { display: flex; align-items: center; justify-content: flex-end; gap: 20px; height: 24px; padding-right: 4px; margin-bottom: 10px; }
.ptools button { width: 23px; height: 23px; border: 2px solid #5ba4f5; background: #d5ecfa; color: #666; }
.ptable { height: 275px; border: 1px solid #e6e6e8; }
.ptable table { width: 100%; table-layout: fixed; border-collapse: collapse; }
.ptable th { height: 30px; font-weight: 400; background: linear-gradient(#bbb, #bbb) right / 1px 20px no-repeat, #fff; padding: 0 6px 0 0; }
.ptable td { height: 31px; padding: 0; background: #fff; border: 1px solid #e0e0e2; }
.ptable td i { padding-left: 1px; }
.val { display: flex; }
.val .fx { width: 33px; border: 0; background: #f4f4f6; position: relative; padding-bottom: 4px; }
.val .fx svg { position: absolute; right: 5px; bottom: 2px; }
.val input { flex: 1; min-width: 0; height: 30px; border: 2px solid #d9d9db; padding: 0 4px; font: 15px/20px "Liberation Mono", monospace; }
.inherit { margin: 17px 0 0 2px; }

.notes { position: absolute; left: 0; top: 0; pointer-events: none; }
.ime { position: absolute; right: 0; bottom: 12px; display: flex; align-items: flex-end; z-index: 3; }
.ime > svg { margin-right: -12px; z-index: 1; }
.imebar { display: flex; align-items: center; gap: 16px; height: 39px; width: 192px; padding-left: 18px; background: #fff; border: 1px solid #b9cdea; border-right: 0; color: #0a6fd8; font-size: 21px; font-weight: 700; }
.clock { position: absolute; right: 116px; top: calc(100% - 5px); height: 5px; overflow: hidden; color: #fff; font-size: 17px; line-height: 18px; }
```
